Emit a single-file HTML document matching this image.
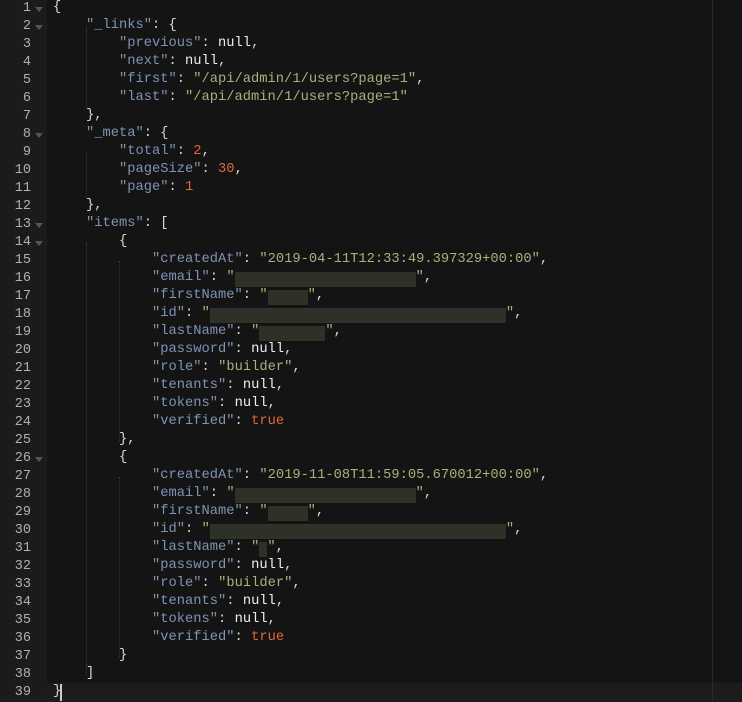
<!DOCTYPE html>
<html><head><meta charset="utf-8"><style>
html,body{margin:0;padding:0;background:#141414;width:742px;height:702px;overflow:hidden}
#g{position:absolute;left:0;top:0;width:47px;height:702px;background:#1b1b1b}
.ln{position:absolute;left:0;width:31px;text-align:right;color:#b0b0b0;font:13.5px "Liberation Mono",monospace;height:18px;line-height:18px}
.fa{position:absolute;left:35px;width:0;height:0;border-left:4px solid transparent;border-right:4px solid transparent;border-top:5px solid #555}
.l{position:absolute;left:53px;height:18px;line-height:18px;font:13.75px "Liberation Mono",monospace;color:#d8d8d8;white-space:pre;overflow:hidden}
.k{color:#7f93b5}.s{color:#a6b27a}.n{color:#e0683e}.w{color:#eeeeee}
.r{display:inline-block;height:15px;vertical-align:top;margin-top:2px;background:#2d3127}
#act{position:absolute;left:47px;top:683px;width:695px;height:19px;background:#1c1c1c}
#pm{position:absolute;left:712px;top:0;width:1px;height:702px;background:#2a2a2a}
.ig{position:absolute;width:0;border-left:1px dotted #3a3a3a}
#cur{position:absolute;left:60px;top:684px;width:2px;height:17px;background:#ccc}
</style></head><body>
<div id="act"></div><div id="pm"></div><div id="g"></div>
<div class="ig" style="left:86px;top:27px;height:81px"></div>
<div class="ig" style="left:86px;top:153px;height:45px"></div>
<div class="ig" style="left:86px;top:243px;height:432px"></div>
<div class="ig" style="left:119px;top:261px;height:180px"></div>
<div class="ig" style="left:119px;top:477px;height:180px"></div>
<div id="cur"></div>
<script>
const L=[
'{',
'    <span class=k>"_links"</span>: {',
'        <span class=k>"previous"</span>: <span class=w>null</span>,',
'        <span class=k>"next"</span>: <span class=w>null</span>,',
'        <span class=k>"first"</span>: <span class=s>"/api/admin/1/users?page=1"</span>,',
'        <span class=k>"last"</span>: <span class=s>"/api/admin/1/users?page=1"</span>',
'    },',
'    <span class=k>"_meta"</span>: {',
'        <span class=k>"total"</span>: <span class=n>2</span>,',
'        <span class=k>"pageSize"</span>: <span class=n>30</span>,',
'        <span class=k>"page"</span>: <span class=n>1</span>',
'    },',
'    <span class=k>"items"</span>: [',
'        {',
'            <span class=k>"createdAt"</span>: <span class=s>"2019-04-11T12:33:49.397329+00:00"</span>,',
'            <span class=k>"email"</span>: <span class=s>"<span class=r style="width:181px"></span>"</span>,',
'            <span class=k>"firstName"</span>: <span class=s>"<span class=r style="width:40px"></span>"</span>,',
'            <span class=k>"id"</span>: <span class=s>"<span class=r style="width:296px"></span>"</span>,',
'            <span class=k>"lastName"</span>: <span class=s>"<span class=r style="width:66px"></span>"</span>,',
'            <span class=k>"password"</span>: <span class=w>null</span>,',
'            <span class=k>"role"</span>: <span class=s>"builder"</span>,',
'            <span class=k>"tenants"</span>: <span class=w>null</span>,',
'            <span class=k>"tokens"</span>: <span class=w>null</span>,',
'            <span class=k>"verified"</span>: <span class=n>true</span>',
'        },',
'        {',
'            <span class=k>"createdAt"</span>: <span class=s>"2019-11-08T11:59:05.670012+00:00"</span>,',
'            <span class=k>"email"</span>: <span class=s>"<span class=r style="width:181px"></span>"</span>,',
'            <span class=k>"firstName"</span>: <span class=s>"<span class=r style="width:40px"></span>"</span>,',
'            <span class=k>"id"</span>: <span class=s>"<span class=r style="width:296px"></span>"</span>,',
'            <span class=k>"lastName"</span>: <span class=s>"<span class=r style="width:8px"></span>"</span>,',
'            <span class=k>"password"</span>: <span class=w>null</span>,',
'            <span class=k>"role"</span>: <span class=s>"builder"</span>,',
'            <span class=k>"tenants"</span>: <span class=w>null</span>,',
'            <span class=k>"tokens"</span>: <span class=w>null</span>,',
'            <span class=k>"verified"</span>: <span class=n>true</span>',
'        }',
'    ]',
'}'];
const folds=[1,2,8,13,14,26];
let h='';
L.forEach((t,i)=>{const y=i*18;
h+=`<div class=ln style="top:${y}px">${i+1}</div>`;
if(folds.includes(i+1))h+=`<div class=fa style="top:${y+7}px"></div>`;
h+=`<div class=l style="top:${y}px">${t}</div>`;});
document.body.insertAdjacentHTML('beforeend',h);
</script>
</body></html>
